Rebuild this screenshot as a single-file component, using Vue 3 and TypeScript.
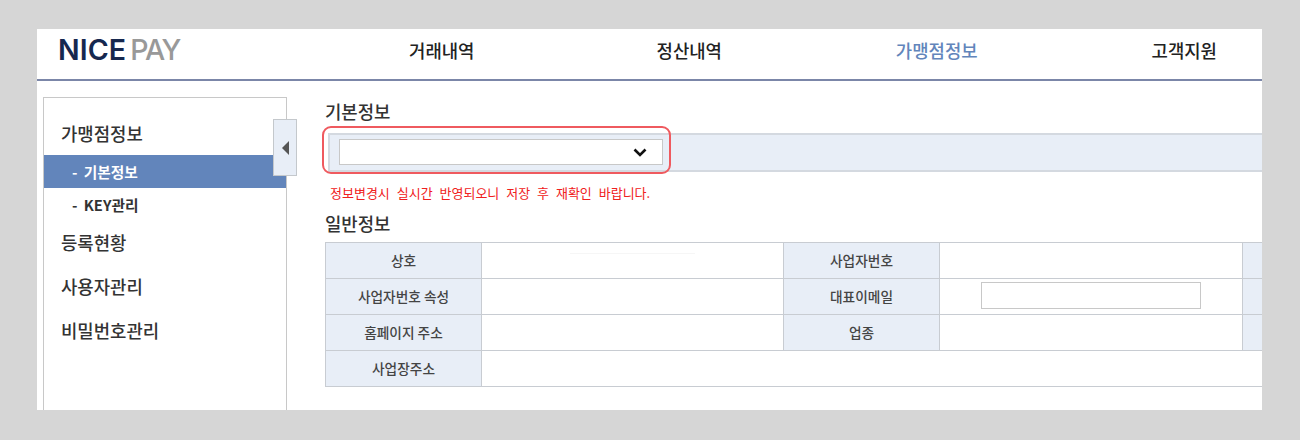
<script setup lang="ts">
const navItems = [
  { label: '거래내역', active: false },
  { label: '정산내역', active: false },
  { label: '가맹점정보', active: true },
  { label: '고객지원', active: false },
]
const otherMenus = ['등록현황', '사용자관리', '비밀번호관리']
</script>

<template>
  <div class="stage">
    <header class="top">
      <div class="logo"><span class="nice">NICE</span><span class="pay">PAY</span></div>
      <nav class="nav">
        <a v-for="item in navItems" :key="item.label" class="nav-item" :class="{ on: item.active }">{{ item.label }}</a>
      </nav>
    </header>
    <div class="body">
      <aside class="side">
        <div class="side-title">가맹점정보</div>
        <div class="side-sub active">- 기본정보</div>
        <div class="side-sub">- KEY관리</div>
        <div v-for="m in otherMenus" :key="m" class="side-title next">{{ m }}</div>
        <button class="collapse" type="button" aria-label="메뉴 접기"><span class="tri"></span></button>
      </aside>
      <main class="main">
        <h2 class="h first">기본정보</h2>
        <div class="bar">
          <div class="select">
            <svg width="14" height="9" viewBox="0 0 14 9"><path d="M1.5 1.5 7 7l5.5-5.5" fill="none" stroke="#111" stroke-width="2.6"/></svg>
          </div>
          <div class="mark"></div>
        </div>
        <p class="notice">정보변경시 실시간 반영되오니 저장 후 재확인 바랍니다.</p>
        <h2 class="h second">일반정보</h2>
        <div class="table">
          <div class="th">상호</div><div class="td"><i class="faint"></i></div>
          <div class="th">사업자번호</div><div class="td"></div><div class="th end"></div>
          <div class="th">사업자번호 속성</div><div class="td"></div>
          <div class="th">대표이메일</div><div class="td"><div class="input"></div></div><div class="th end"></div>
          <div class="th">홈페이지 주소</div><div class="td"></div>
          <div class="th">업종</div><div class="td"></div><div class="th end"></div>
          <div class="th">사업장주소</div><div class="td wide"></div>
        </div>
      </main>
    </div>
  </div>
</template>

<style>
html, body { margin: 0; background: #d6d6d6; }
body { padding: 29px 0 0 37px; height: 411px; overflow: hidden; box-sizing: border-box; }
</style>

<style scoped>
.stage {
  width: 1225px;
  height: 381px;
  background: #fff;
  overflow: hidden;
  font-family: "Noto Sans CJK KR", "Noto Sans", sans-serif;
  color: #333;
}
.top {
  height: 50px;
  border-bottom: 2px solid #7b86a8;
  display: flex;
}
.logo {
  flex: none;
  width: 281px;
  padding: 3px 0 0 21px;
  box-sizing: border-box;
  font-family: Inter, "Liberation Sans", sans-serif;
  font-size: 28.5px;
  line-height: 36px;
  font-weight: 500;
  white-space: nowrap;
}
.nice { color: #16284f; font-weight: 600; letter-spacing: 0.1px; }
.pay { color: #999; margin-left: 4px; letter-spacing: -1.4px; }
.nav {
  display: grid;
  grid-template-columns: repeat(4, 247.5px);
  flex: none;
}
.nav-item {
  text-align: center;
  font-size: 17.8px;
  line-height: 43px;
  font-weight: 500;
  color: #222;
}
.nav-item.on { color: #6285bb; }
.body {
  display: flex;
  align-items: flex-start;
  padding: 16px 0 0 6px;
}
.side {
  position: relative;
  flex: none;
  width: 244px;
  height: 340px;
  box-sizing: border-box;
  border: 1px solid #c8c8c8;
  padding-top: 21px;
}
.side-title {
  padding-left: 17px;
  font-size: 17.8px;
  line-height: 28px;
  font-weight: 500;
  color: #333;
  margin-bottom: 8px;
}
.side-title.next { height: 44px; line-height: 42px; margin: 0; }
.side-sub {
  height: 33px;
  line-height: 33px;
  padding-left: 28px;
  font-size: 14.7px;
  font-weight: 700;
  word-spacing: 3px;
  color: #333;
}
.side-sub.active { background: #6285bb; color: #fff; }
.collapse {
  position: absolute;
  left: 229px;
  top: 21px;
  width: 24px;
  height: 57px;
  padding: 0;
  background: #e8eef7;
  border: 1px solid #c4c8cc;
  display: flex;
  align-items: center;
  justify-content: center;
}
.tri {
  border-style: solid;
  border-width: 7px 7px 7px 0;
  border-color: transparent #555 transparent transparent;
}
.main {
  flex: none;
  width: 980px;
  margin-left: 38px;
}
.h {
  margin: 0;
  font-size: 17.8px;
  line-height: 24px;
  font-weight: 500;
  color: #333;
}
.first { margin-top: 2px; }
.bar {
  position: relative;
  margin: 10px 0 0 3px;
  height: 39px;
  box-sizing: border-box;
  background: #e8eef7;
  border-top: 2px solid #d4d9e0;
  border-bottom: 2px solid #d4d9e0;
  border-left: 2px solid #d4d9e0;
  padding: 4px 0 0 9px;
}
.select {
  width: 324px;
  height: 26px;
  box-sizing: border-box;
  background: #fff;
  border: 1px solid #c8c8c8;
  display: flex;
  align-items: center;
  justify-content: flex-end;
  padding-right: 15px;
}
.mark {
  position: absolute;
  left: -8px;
  top: -9px;
  width: 349px;
  height: 48px;
  box-sizing: border-box;
  border: 2px solid #ef5a5f;
  border-radius: 9px;
}
.notice {
  margin: 11px 0 0 5px;
  font-size: 13px;
  line-height: 20px;
  word-spacing: 4px;
  color: #f02020;
}
.second { margin-top: 8px; }
.table {
  margin-top: 7px;
  width: 1000px;
  display: grid;
  grid-template-columns: 156px 302px 156px 303px 83px;
  grid-auto-rows: 36px;
  border-top: 1px solid #c8ccd2;
  border-left: 1px solid #c8ccd2;
  box-sizing: border-box;
}
.th, .td {
  box-sizing: border-box;
  border-right: 1px solid #c8ccd2;
  border-bottom: 1px solid #c8ccd2;
  padding-bottom: 2px;
  font-size: 13.7px;
  font-weight: 500;
  color: #444;
  display: flex;
  align-items: center;
  justify-content: center;
}
.th { background: #e8eef7; }
.td { background: #fff; }
.wide { grid-column: 2 / -1; }
.input {
  width: 220px;
  height: 27px;
  box-sizing: border-box;
  background: #fff;
  border: 1px solid #c8c8c8;
}
.faint {
  width: 125px;
  height: 1px;
  margin-bottom: 12px;
  background: #f6f6f6;
}
</style>
